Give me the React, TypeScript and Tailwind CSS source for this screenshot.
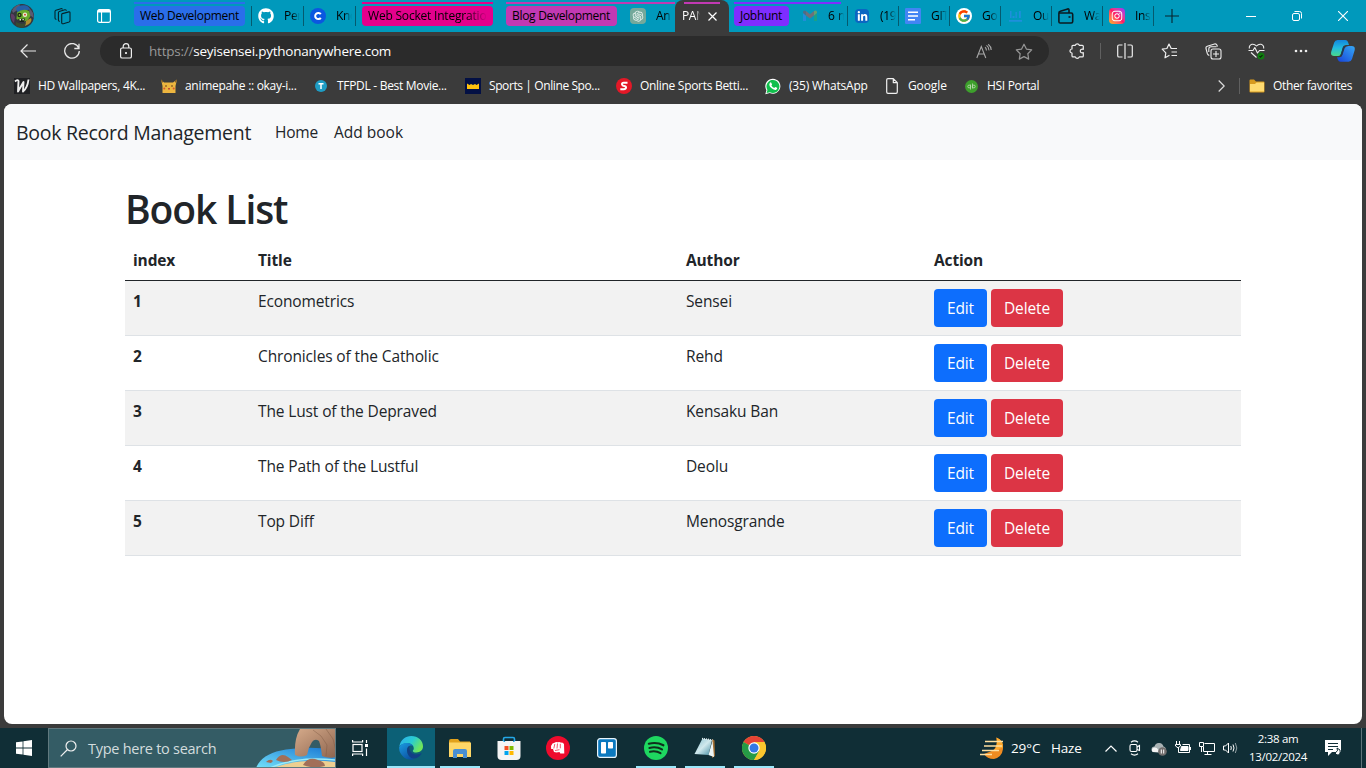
import type { ReactNode } from "react";
import { FaGithub, FaInstagram, FaLinkedinIn } from "react-icons/fa";
import { FcGoogle } from "react-icons/fc";
import { AiOutlineOpenAI } from "react-icons/ai";

/* ---------- tab strip ---------- */

function Tab({ icon, label, width = "w-[51px]" }: { icon: ReactNode; label: string; width?: string }) {
  return (
    <div className={`flex h-8 shrink-0 items-center ${width}`}>
      <span className="ml-[6px] flex size-4 shrink-0 items-center justify-center">{icon}</span>
      <span className="ml-[10px] w-[16px] overflow-hidden whitespace-nowrap text-[12px] tracking-[-0.3px] text-black [mask-image:linear-gradient(to_right,black_50%,transparent)]">
        {label}
      </span>
      <span className="ml-auto h-5 w-px bg-[#055a6e]" />
    </div>
  );
}

function GroupLabel({ label, className }: { label: string; className: string }) {
  return (
    <span className={`flex h-5 items-center overflow-hidden whitespace-nowrap rounded px-[6px] text-[12px] tracking-[-0.3px] text-black ${className}`}>
      {label}
    </span>
  );
}

const Workspaces = () => (
  <svg width="17" height="17" viewBox="0 0 17 17" fill="none" stroke="#06222a" strokeWidth="1.100" strokeLinejoin="round" strokeLinecap="round">
    <path d="M8.300 5.600 14.800 3.900q1.200-.2 1.200.9v8q0 .9-.9 1.200l-5.700 1.700q-1.700.4-1.700-1.200V6.600q0-.8.6-1" />
    <path d="M5.400 13.300q-1-.2-1-1.300V4.700q0-.9.9-1.200l5.500-1.700q1-.2 1.400.5" />
    <path d="M2 11.300q-1-.2-1-1.300V3.400q0-.9.900-1.200L6.900.7q1-.2 1.400.3" />
  </svg>
);

const ContactC = () => (
  <svg width="16" height="16" viewBox="0 0 16 16">
    <circle cx="8" cy="8" r="8" fill="#0b57e0" />
    <path d="M10.800 6.200A3.100 3.100 0 1 0 10.800 9.800" fill="none" stroke="#fff" strokeWidth="2" />
  </svg>
);

const Gmail = () => (
  <svg width="16" height="14" viewBox="0 0 16 14" opacity=".5">
    <path d="M1 12V4l3 2.400V12z" fill="#4285f4" />
    <path d="M15 12V4l-3 2.400V12z" fill="#34a853" />
    <path d="M1 4V2.500Q2 .8 4 2v4.400z" fill="#a04050" />
    <path d="M4 6.400V2l4 3.200L12 2v4.400l-4 3.200z" fill="#d9483b" />
    <path d="M15 4V2.500Q14 .8 12 2v4.400z" fill="#c8a526" />
  </svg>
);

const Docs = () => (
  <svg width="16" height="16" viewBox="0 0 16 16">
    <rect width="16" height="16" rx="1.200" fill="#4285f4" />
    <path d="M3 4.300h10M3 8h10M3 11.700h7" stroke="#fff" strokeWidth="1.600" />
  </svg>
);

const Wallet = () => (
  <svg width="16" height="16" viewBox="0 0 16 16" fill="none" stroke="#0b1a20" strokeWidth="1.600" strokeLinejoin="round">
    <path d="M1 5h12.200q1.500 0 1.500 1.500v7q0 1.500-1.500 1.500h-11Q.9 15 .9 13.700V5q0-1.400 1.400-1.700l7.500-2.400q1.200-.3 1.200 1V5" />
    <path d="M10.500 9h2" />
  </svg>
);

const City = () => (
  <svg width="13" height="12" viewBox="0 0 13 12" fill="#1f8fdc">
    <path d="M0 10h13v1.700H0zM1 1h1.500v7H1zM3.500 6h2v2h-2zM6.500 2h1.300v6H6.500zM10 1h1.800v7H10z" />
  </svg>
);

function TabStrip() {
  return (
    <div className="flex h-8 items-center bg-[#0099bc]">
      <svg className="ml-[10px] shrink-0" width="24" height="24" viewBox="0 0 24 24">
        <circle cx="12" cy="12" r="12" fill="#33363f" />
        <path d="M2 6.500Q5 1 10 .2L9 5 3 9zM19 4q5 4 4.700 10l-4-3z" fill="#5a5a72" />
        <path d="M6 5Q8 1 14 1.300q5 .2 6 4.200l-5 1-7 2.500z" fill="#2460a8" />
        <path d="M7 8.500q6-4.500 12-1.500l1.500 5-3 4.500-5 1.500-6-3z" fill="#68a82c" />
        <path d="M1 10q2.500-1 4 3l-1 6q-3.500-3.500-3-9" fill="#603c65" />
        <path d="m16 17 5-3q1.500 3-2 6l-4 2z" fill="#b09030" />
        <circle cx="9.500" cy="11" r="2.200" fill="#1c2a14" />
        <circle cx="15" cy="10.700" r="2.200" fill="#e8eed0" />
        <circle cx="15" cy="10.700" r=".9" fill="#d03020" />
        <circle cx="9.500" cy="11" r=".8" fill="#c4d55a" />
        <path d="m8 15 7-.500-1 3.500h-4z" fill="#18251a" />
        <path d="M9.500 15H11v1.500H9.500zm3 0h1.300v1.300h-1.300z" fill="#e8f0c8" />
        <path d="M6 18q5 3 10 1l-2 4.500q-5 .7-8-2z" fill="#3a4a30" />
      </svg>
      <span className="ml-[20px] w-[17px] shrink-0"><Workspaces /></span>
      <svg className="ml-[26px] shrink-0" width="14" height="14" viewBox="0 0 14 14">
        <rect x=".600" y=".600" width="12.800" height="12.800" rx="1.800" fill="none" stroke="#fff" strokeWidth="1.200" />
        <path d="M1 1h12v2.600H1zM4 3.500h1.100V13H4z" fill="#fff" />
      </svg>
      <div className="ml-[23px] flex h-8 w-[111px] shrink-0 flex-col pt-[2px]">
        <span className="mb-[2px] h-[2px] bg-[#2a6eea]" />
        <GroupLabel label="Web Development" className="bg-[#2a6eea]" />
      </div>
      <span className="ml-[6px] h-5 w-px shrink-0 bg-[#055a6e]" />
      <Tab icon={<FaGithub size={16} color="#fff" />} label="Per" width="w-[52px]" />
      <Tab icon={<ContactC />} label="Kno" width="w-[52px]" />
      <div className="ml-[6px] flex h-8 w-[131px] shrink-0 flex-col pt-[2px]">
        <span className="mb-[2px] h-[2px] bg-[#e3008c]" />
        <span className="flex h-5 items-center rounded bg-[#e3008c] px-[6px]">
          <span className="overflow-hidden whitespace-nowrap text-[12px] tracking-[-0.2px] text-black [mask-image:linear-gradient(to_right,black_82%,transparent)]">Web Socket Integration</span>
        </span>
      </div>
      <div className="ml-[13px] flex h-8 w-[169px] shrink-0 flex-col pt-[2px]">
        <span className="mb-[2px] h-[2px] bg-[#c239b3]" />
        <div className="flex items-center">
          <GroupLabel label="Blog Development" className="w-[111px] bg-[#c239b3]" />
          <span className="ml-[13px] flex size-4 items-center justify-center rounded-sm bg-[#74a99b]"><AiOutlineOpenAI size={14} color="#e6f2ee" /></span>
          <span className="ml-[10px] w-[15px] overflow-hidden whitespace-nowrap text-[12px] tracking-[-0.3px] [mask-image:linear-gradient(to_right,black_70%,transparent)]">Ani</span>
        </div>
      </div>
      <div className="flex h-8 w-[54px] shrink-0 flex-col rounded-t-lg bg-[#3b3b3b] pt-[2px]">
        <span className="mx-[9px] mb-[2px] h-[2px] bg-[#c239b3]" />
        <div className="flex h-5 items-center">
          <span className="ml-[7px] w-[18px] overflow-hidden whitespace-nowrap text-[12px] tracking-[-0.4px] text-white [mask-image:linear-gradient(to_right,black_75%,transparent)]">PAN</span>
          <svg className="ml-[8px]" width="9" height="9" viewBox="0 0 9 9" stroke="#fff" strokeWidth="1.200"><path d="m.5.5 8 8m0-8-8 8" /></svg>
        </div>
      </div>
      <div className="ml-[5px] flex h-8 w-[114px] shrink-0 flex-col pt-[2px]">
        <span className="mb-[2px] h-[2px] w-[107px] bg-[#7f2dff]" />
        <div className="flex items-center">
          <GroupLabel label="Jobhunt" className="w-[55px] bg-[#7f2dff]" />
          <span className="ml-[13px] flex size-4 items-center justify-center"><Gmail /></span>
          <span className="ml-[10px] w-[16px] overflow-hidden whitespace-nowrap text-[12px] [mask-image:linear-gradient(to_right,black_60%,transparent)]">6 new</span>
          <span className="ml-auto h-5 w-px bg-[#055a6e]" />
        </div>
      </div>
      <Tab icon={<span className="flex size-[14px] items-center justify-center rounded-sm bg-[#0a66c2]"><FaLinkedinIn size={11} color="#fff" /></span>} label="(19)" />
      <Tab icon={<Docs />} label="GIT" />
      <Tab icon={<span className="flex size-4 items-center justify-center rounded-full bg-white"><FcGoogle size={14} /></span>} label="Goo" />
      <Tab icon={<City />} label="Out" />
      <Tab icon={<Wallet />} label="Wal" />
      <Tab icon={<span className="flex size-4 items-center justify-center rounded bg-gradient-to-tr from-[#ffb000] via-[#ff1464] to-[#9a20ff]"><FaInstagram size={12} color="#fff" /></span>} label="Inst" />
      <svg className="ml-[11px] shrink-0" width="14" height="14" viewBox="0 0 14 14" stroke="#08242c" strokeWidth="1.100"><path d="M7 0v14M0 7h14" /></svg>
      <svg className="ml-auto shrink-0" width="10" height="10" viewBox="0 0 10 10" stroke="#fff"><path d="M0 5.500h10" /></svg>
      <svg className="ml-[36px] shrink-0" width="10" height="10" viewBox="0 0 10 10" fill="none" stroke="#fff"><rect x=".5" y="2.500" width="7" height="7" rx="1.500" /><path d="M2.500.5H7.500q2 0 2 2v5" /></svg>
      <svg className="ml-[36px] mr-[18px] shrink-0" width="10" height="10" viewBox="0 0 10 10" stroke="#fff" strokeWidth="1.100"><path d="m0 0 10 10M10 0 0 10" /></svg>
    </div>
  );
}

/* ---------- address bar ---------- */

function AddressRow() {
  return (
    <div className="flex h-[38px] items-center">
      <svg className="ml-[20px] shrink-0" width="16" height="14" viewBox="0 0 16 14" fill="none" stroke="#e8e8e8" strokeWidth="1.200"><path d="M16 7H1M7.500.5 1 7l6.500 6.500" /></svg>
      <svg className="ml-[28px] shrink-0" width="16" height="16" viewBox="0 0 16 16" fill="none" stroke="#e8e8e8" strokeWidth="1.300"><path d="M14.800 5.200A7.300 7.300 0 1 0 15.300 8M15 .8v4.700h-4.700" /></svg>
      <div className="ml-[20px] flex h-[30px] w-[949px] shrink-0 items-center rounded-full bg-[#2b2b2b]">
        <svg className="ml-[20px]" width="12" height="16" viewBox="0 0 12 16" fill="none" stroke="#eee" strokeWidth="1.200"><rect x=".6" y="5" width="10.800" height="10" rx="1.600" /><path d="M3.200 5V3.500a2.800 2.800 0 0 1 5.600 0V5" /><circle cx="6" cy="10" r=".5" fill="#fff" /></svg>
        <span className="ml-[17px] text-[13.500px] tracking-[-0.230px] text-white"><span className="text-[#999]">https://</span>seyisensei.pythonanywhere.com</span>
        <svg className="ml-auto" width="16" height="15" viewBox="0 0 16 15" fill="none" stroke="#a8a8a8" strokeWidth="1.100"><path d="m.8 14 4.500-11.500L9.800 14M2.400 10h5.800M9 3.300q1.500 1 1.400 3.200M10.500 1.400q2.600 1.700 2.400 5M12.200.3q3 2.200 3 5.700" /></svg>
        <svg className="ml-[23px] mr-[16px]" width="18" height="17" viewBox="0 0 18 17" fill="none" stroke="#969696" strokeWidth="1.200" strokeLinejoin="round"><path d="m9 1.200 2.400 4.900 5.300.8-3.900 3.800.9 5.400L9 13.600l-4.700 2.500.9-5.400L1.300 6.900l5.300-.8z" /></svg>
      </div>
      <div className="flex flex-1 items-center text-[#eee]">
        <svg className="ml-[20px]" width="16" height="16" viewBox="0 0 16 16" fill="none" stroke="currentColor" strokeWidth="1.200" strokeLinejoin="round"><path d="M4 2.300h2.300a2.100 2.100 0 0 1 4 0h3q1 0 1 1v3q-3-.6-3 1.700t3 1.700v3.200q0 1-1 1h-3a2.100 2.100 0 0 1-4 0H4q-1 0-1-1V10A2 2 0 0 1 3 6V3.300q0-1 1-1" /></svg>
        <span className="ml-[15px] h-4 w-px bg-[#606060]" />
        <svg className="ml-[16px]" width="16" height="16" viewBox="0 0 16 16" fill="none" stroke="currentColor" strokeWidth="1.200"><path d="M8 0v16M5.500 2H2Q.7 2 .7 3.300v9.400Q.7 14 2 14h3.500M10.500 2H14q1.300 0 1.300 1.300v9.400q0 1.300-1.300 1.300h-3.500" /></svg>
        <svg className="ml-[28px]" width="17" height="16" viewBox="0 0 17 16" fill="none" stroke="currentColor" strokeWidth="1.200" strokeLinejoin="round"><path d="M8.500 12.200 4 14.800l.8-5L1.200 6.200l4.700-.7L8 1l2.200 4.500H16M10.500 9H16M10.500 12.500H16" /></svg>
        <svg className="ml-[27px]" width="17" height="17" viewBox="0 0 17 17" fill="none" stroke="currentColor" strokeWidth="1.100"><rect x="6" y="6" width="10" height="10" rx="2" /><path d="M11 8v6M8 11h6M4.300 12.500Q2.800 12 2.300 10.500L1 5.500Q.6 3.700 2.300 3.200L9.500 1q1.800-.4 2.500 1.200l.4 1.500M3.800 9V6q0-2.200 2.200-2.200h5.500" /></svg>
        <svg className="ml-[26px]" width="17" height="17" viewBox="0 0 17 17" fill="none" stroke="currentColor" strokeWidth="1.100" strokeLinejoin="round"><path d="M.5 7.500H5l1.800-3L9.500 10l2-2.500H16.500M1.300 5.500Q1 2.200 4 1.300 6.500.8 8.500 3q2-2.200 4.500-1.700 3 .9 2.700 4.200M3 9.500l5.500 5" /><circle cx="13" cy="13" r="3.500" fill="#107c10" stroke="none" /><path d="m11.500 13.200 1 1 2-2" stroke="#062a06" /></svg>
        <svg className="ml-[29px]" width="14" height="4" viewBox="0 0 14 4" fill="currentColor"><circle cx="2" cy="2" r="1.300" /><circle cx="7" cy="2" r="1.300" /><circle cx="12" cy="2" r="1.300" /></svg>
        <svg className="ml-[23px]" width="24" height="22" viewBox="0 0 24 22">
          <defs>
            <linearGradient id="cpA" x1="0" y1="0" x2="0" y2="1"><stop stopColor="#1285dd" /><stop offset=".5" stopColor="#22bbe0" /><stop offset="1" stopColor="#4ad88c" /></linearGradient>
            <linearGradient id="cpB" x1="0" y1="1" x2="1" y2="0"><stop stopColor="#1742d8" /><stop offset="1" stopColor="#35a8f5" /></linearGradient>
          </defs>
          <path d="M6.500 0h7.800q2 0 2.700 2l1 3h-3.200q-2.300 0-3 2.500L10 13.500q-.8 2.500-2.800 2.500H3Q-.9 16 .3 11.500L3.200 2.500Q4 0 6.500 0" fill="url(#cpA)" />
          <path d="M17.500 6h3.200Q24.600 6 23.600 10.500L21 19q-.8 2.700-3.500 2.700H9.500q-2 0-2.600-2L6 17.200h2.500q2.300 0 3-2.500l2-6.200Q14.300 6 17.500 6" fill="url(#cpB)" />
          <path d="m12.800 6.500-2.600 9" stroke="#173a60" strokeWidth="1.200" />
        </svg>
      </div>
    </div>
  );
}

/* ---------- favorites ---------- */

function Favorite({ icon, label, className }: { icon: ReactNode; label: string; className: string }) {
  return (
    <div className={`flex shrink-0 items-center ${className}`}>
      <span className="flex size-4 shrink-0 items-center justify-center">{icon}</span>
      <span className="ml-2 whitespace-nowrap">{label}</span>
    </div>
  );
}

function FavoritesRow() {
  return (
    <div className="flex h-[34px] items-center pb-[2px] pl-[14px] text-[12px] tracking-[-0.300px] text-white">
      <Favorite className="w-[147px]" label="HD Wallpapers, 4K..." icon={
        <svg width="16" height="16" viewBox="0 0 16 16"><rect width="16" height="16" fill="#202124" /><path d="M1 3.500q3-2.500 3.500-.5L4 13.500 9.500 4 9 13.500Q13.500 10 14.500 1.500" fill="none" stroke="#eee" strokeWidth="1.900" strokeLinejoin="round" /></svg>} />
      <Favorite className="w-[152px]" label="animepahe :: okay-i..." icon={
        <svg width="16" height="14" viewBox="0 0 16 14"><path d="m0 .5 3 3h9L16 .500 14.500 7v7h-13V7z" fill="#ecb53f" /><path d="m0 .5 2 1.600L1.200 4zM16 .5 14 2l.8 2z" fill="#6b4a20" /><circle cx="5" cy="7" r=".8" fill="#5a3315" /><circle cx="11" cy="7" r=".8" fill="#5a3315" /><circle cx="3.300" cy="9.500" r="1" fill="#d95530" /><circle cx="12.700" cy="9.500" r="1" fill="#d95530" /><path d="M7 9h2v1.500H7z" fill="#c04b35" /></svg>} />
      <Favorite className="w-[152px]" label="TFPDL - Best Movie..." icon={
        <svg width="12" height="12" viewBox="0 0 12 12"><circle cx="6" cy="6" r="6" fill="#1e9cc4" /><path d="M3.500 3.700h5M6 3.500v5.500" stroke="#fff" strokeWidth="1.500" /></svg>} />
      <Favorite className="w-[151px] tracking-[-0.400px]" label="Sports | Online Spo..." icon={
        <svg width="16" height="16" viewBox="0 0 16 16"><rect width="16" height="16" fill="#031044" /><path d="M2 5.500 4.500 7 6 6l2 1 2-1 1.500 1L14 5.500V11H2z" fill="#ffc20e" /></svg>} />
      <Favorite className="w-[149px]" label="Online Sports Betti..." icon={
        <svg width="16" height="16" viewBox="0 0 16 16"><circle cx="8" cy="8" r="8" fill="#e41827" /><path d="M11.500 4.700H7.800Q5.700 4.700 6 6.400T8.200 8q2 0 1.800 1.700T7.500 11.300H4.300" fill="none" stroke="#fff" strokeWidth="2" /></svg>} />
      <Favorite className="w-[119px] tracking-[-0.200px]" label="(35) WhatsApp" icon={
        <svg width="17" height="17" viewBox="0 0 17 17"><path d="m.3 16.700 1.200-4.300A8 8 0 1 1 5 15.500z" fill="#fff" /><path d="m1.700 15.300.9-3.200A6.900 6.900 0 1 1 5.200 14.500z" fill="#10bf4c" /><path d="M5 5q1-1.500 1.700-.5l.8 1.800-.7 1.100q1 1.800 3 2.600l1-1.100 2.100 1q.5 1-1 2-1.700.7-4.500-1.200T4.600 7Q4.500 5.800 5 5" fill="#fff" /></svg>} />
      <Favorite className="w-[79px] tracking-[-0.100px]" label="Google" icon={
        <svg width="12" height="16" viewBox="0 0 12 16" fill="none" stroke="#f0f0f0" strokeWidth="1.200" strokeLinejoin="round"><path d="M7.300.7H2Q.7.700.7 2v12q0 1.300 1.300 1.300h8q1.300 0 1.300-1.300V4.700zv4h4" /></svg>} />
      <Favorite className="" label="HSI Portal" icon={
        <svg width="13" height="13" viewBox="0 0 13 13"><circle cx="6.500" cy="6.500" r="6.500" fill="#3d9f2c" /><path d="M5.500 4.500v5M7.500 3.500v5" stroke="#bfe0b5" strokeWidth=".8" /><circle cx="4.200" cy="6.500" r="1.400" fill="none" stroke="#bfe0b5" strokeWidth=".8" /><circle cx="8.800" cy="6.500" r="1.400" fill="none" stroke="#bfe0b5" strokeWidth=".8" /></svg>} />
      <svg className="ml-auto" width="7" height="12" viewBox="0 0 7 12" fill="none" stroke="#ddd" strokeWidth="1.200"><path d="m.7.5 5.500 5.500-5.500 5.500" /></svg>
      <span className="ml-[14px] h-4 w-px bg-[#606060]" />
      <div className="ml-[9px] mr-[14px] flex items-center">
        <svg width="16" height="14" viewBox="0 0 16 14"><path d="M.5 1.500q0-1 1-1H5L7 2.500h7.500q1 0 1 1v9q0 1-1 1h-13q-1 0-1-1z" fill="#d79a1e" /><path d="M1 5h5l1.500-1.500H15v9H1z" fill="#ffdb70" /></svg>
        <span className="ml-2 w-[79px] whitespace-nowrap tracking-[-0.350px]">Other favorites</span>
      </div>
    </div>
  );
}

/* ---------- page ---------- */

const books = [
  { title: "Econometrics", author: "Sensei" },
  { title: "Chronicles of the Catholic", author: "Rehd" },
  { title: "The Lust of the Depraved", author: "Kensaku Ban" },
  { title: "The Path of the Lustful", author: "Deolu" },
  { title: "Top Diff", author: "Menosgrande" },
];

function BookPage() {
  return (
    <div className="mx-1 h-[620px] overflow-hidden rounded-lg bg-white text-[16px] text-[#212529]">
      <nav className="flex h-14 items-center bg-[#f8f9fa] px-3 pt-[2px]">
        <a className="w-[259px] whitespace-nowrap text-[19.500px] leading-[30px] tracking-[-0.270px]">Book Record Management</a>
        <a className="w-[59px] whitespace-nowrap text-[15.500px] tracking-[-0.200px]">Home</a>
        <a className="whitespace-nowrap text-[15.500px]">Add book</a>
      </nav>
      <main className="ml-[121px] mt-6 w-[1116px]">
        <h1 className="mb-2 h-12 pt-px text-[39px] font-semibold leading-[48px] tracking-[-1.100px]">Book List</h1>
        <table className="w-full table-fixed border-collapse text-left text-[15.500px] leading-6 tracking-[-0.130px]">
          <thead>
            <tr className="h-[40px] border-b border-[#212529]">
              <th className="w-[125px] px-2 pt-px">index</th>
              <th className="w-[428px] px-2 pt-px">Title</th>
              <th className="w-[248px] px-2 pt-px">Author</th>
              <th className="px-2 pt-px">Action</th>
            </tr>
          </thead>
          <tbody>
            {books.map((b, i) => (
              <tr key={b.title} className="h-[55px] border-b border-[#dee2e6] align-top odd:bg-[#f2f2f2]">
                <th className="p-2">{i + 1}</th>
                <td className="p-2">{b.title}</td>
                <td className="p-2">{b.author}</td>
                <td className="p-2">
                  <div className="flex gap-1 text-white">
                    <button className="h-[38px] w-[53px] rounded bg-[#0d6efd]">Edit</button>
                    <button className="h-[38px] w-[72px] rounded bg-[#dc3545]">Delete</button>
                  </div>
                </td>
              </tr>
            ))}
          </tbody>
        </table>
      </main>
    </div>
  );
}

/* ---------- taskbar ---------- */

function TaskItem({ children, active, running }: { children: ReactNode; active?: boolean; running?: boolean }) {
  return (
    <div className={`mr-px flex h-10 w-12 shrink-0 flex-col items-center ${active ? "bg-[#0c6076]" : ""}`}>
      <span className="flex h-[38px] items-center pt-[2px]">{children}</span>
      {(active || running) && <span className={`h-[2px] bg-[#9be7fa] ${active ? "w-12" : "w-10"}`} />}
    </div>
  );
}

function SearchBox() {
  return (
    <div className="flex h-10 w-[288px] shrink-0 items-center overflow-hidden border border-[#60797f] bg-[#345c65]">
      <svg className="ml-[11px]" width="17" height="17" viewBox="0 0 17 17" fill="none" stroke="#f0f0f0" strokeWidth="1.200"><circle cx="11" cy="6" r="5" /><path d="M7.500 9.500.7 16.300" /></svg>
      <span className="ml-[11px] whitespace-nowrap pt-px text-[14.500px] tracking-[-0.270px] text-[#d3dcde]">Type here to search</span>
      <svg className="-mr-px ml-auto shrink-0" width="80" height="39" viewBox="0 0 80 39">
        <defs>
          <linearGradient id="sea" x1="0" y1="1" x2="1" y2="0"><stop stopColor="#74e2fa" /><stop offset="1" stopColor="#1675d2" /></linearGradient>
          <linearGradient id="rock" x1="0" y1="0" x2="1" y2="1"><stop stopColor="#d5aa8a" /><stop offset="1" stopColor="#8e654f" /></linearGradient>
        </defs>
        <path d="M0 39Q6 24 30 20.500 55 17 80 21v18z" fill="url(#sea)" />
        <path d="M17 39q25-10 63-6v6z" fill="#edcf91" />
        <path d="M14 39q26-12 66-8" fill="none" stroke="#9eeaf7" strokeWidth="1.500" />
        <path d="M44 0h36v28q-8 2-14-1-1-10-3-15-4-3-7 1-4 6-5 13-6 3-12 0Q38 10 44 0" fill="url(#rock)" />
        <path d="m57 1 8 6 6 9-1 11M70 0l7 10 3 12" fill="none" stroke="#78543f" opacity=".4" />
        <path d="M20 31q5-8 12-3l4 3q-8 4-16 0M47 36q5-9 15-5 7 2 7 6-12 3-22-1M10 33q4-4 7-1l-2 2z" fill="#a26f58" />
      </svg>
    </div>
  );
}

function Taskbar() {
  return (
    <div className="flex h-10 items-center bg-[#102e36] text-white">
      <svg className="mx-4 shrink-0" width="16" height="16" viewBox="0 0 16 16" fill="#fff"><path d="m0 2.300 6.600-.9v6.200H0zM7.400 1.300 16 0v7.600H7.400zM0 8.400h6.600v6.200L0 13.700zM7.400 8.400H16V16l-8.600-1.200z" /></svg>
      <SearchBox />
      <svg className="ml-[16px] mr-[19px] shrink-0" width="16" height="16" viewBox="0 0 16 16" fill="none" stroke="#fff" strokeWidth="1.200"><rect x="1" y="4.500" width="9" height="7" /><path d="M.6 0v2h10V0M.6 16v-2h10v2M14.500 0v3M14.500 8.500V16" /><path d="M13 4h3v3h-3z" fill="#fff" stroke="none" /></svg>
      <TaskItem active>
        <svg width="24" height="24" viewBox="0 0 24 24">
          <defs>
            <linearGradient id="edgeTop" x1="0" y1="0" x2="1" y2=".5"><stop stopColor="#2dacef" /><stop offset=".55" stopColor="#29cbd2" /><stop offset="1" stopColor="#70e65a" /></linearGradient>
            <linearGradient id="edgeLow" x1="0" y1="0" x2=".7" y2="1"><stop stopColor="#1b9ce2" /><stop offset="1" stopColor="#0b4fa0" /></linearGradient>
          </defs>
          <path d="M.3 10.500C1.500 4 6.500 0 12.200 0 19 0 24 4.800 24 10.300c0 4-3 6.200-6.500 6.200-2.800 0-4-1-3.700-1.800.2-.5 1-1 1-2.500 0-3-3-5-6.600-5C4.500 7.200 1.500 8.500.3 10.500" fill="url(#edgeTop)" />
          <path d="M.1 11.500C1 8.500 4.500 6.800 8.200 6.900c3 0 5.500 1.300 6.200 3.300-1-.7-2-.9-3-.7-2.500.6-3.700 3.200-3.200 6 .7 4 4 7 7.800 7.500A12 12 0 0 1 .1 11.500" fill="url(#edgeLow)" />
          <path d="M8.200 15.500c-.5-2.800.7-5 2.600-5.700-1.500 3 .6 8.200 5.700 8.700 2.200.2 4.400-.6 5.500-1.200.5-.2.700.1.500.5-3 4.700-7.500 5.500-10 4.300-2.300-1-4-3.500-4.300-6.600" fill="#123f86" />
        </svg>
      </TaskItem>
      <TaskItem running>
        <svg width="22" height="19" viewBox="0 0 22 19"><path d="M0 2q0-2 2-2h7l2 2.500h10V18H0z" fill="#e2a21c" /><path d="M0 3.500h22V18H0z" fill="#ffd767" /><path d="M4 19v-7q0-2 2-2h10q2 0 2 2v7h-4v-4H8v4z" fill="#4a90d2" /></svg>
      </TaskItem>
      <TaskItem>
        <svg width="24" height="24" viewBox="0 0 24 24"><path d="M6.500 7V3q0-1.500 1.500-1.500h8Q17.500 1.500 17.500 3v4" fill="none" stroke="#24a8e8" strokeWidth="1.600" /><path d="M.5 5h23v15q0 4-4 4h-15q-4 0-4-4z" fill="#f4f4f4" /><path d="M6.500 6V5h1.600v1zM16 6V5h1.600v1z" fill="#24a8e8" /><path d="M7.500 10h4v4h-4z" fill="#f25022" /><path d="M12.500 10h4v4h-4z" fill="#7fba00" /><path d="M7.500 15h4v4h-4z" fill="#00a4ef" /><path d="M12.500 15h4v4h-4z" fill="#ffb900" /></svg>
      </TaskItem>
      <TaskItem>
        <svg width="24" height="24" viewBox="0 0 24 24"><circle cx="12" cy="12" r="12" fill="#ee0b2d" /><path d="m5 10 1.500-2.500 2-.7L10 6l1.700.3 1.500-.3 1.500.5 2 .2 1.300 1.300.3 9.500h-4l-.8-1.500-3 .5-2.500-.5-1-3H5.200z" fill="#fff" /><path d="m8.800 8-1 4.500M11.500 7.500 11 12.500M14.300 7.800v4.500M9 14.500l4.500-.8" stroke="#ee0b2d" strokeWidth=".7" fill="none" /></svg>
      </TaskItem>
      <TaskItem>
        <svg width="20" height="20" viewBox="0 0 20 20"><rect x=".6" y=".6" width="18.800" height="18.800" rx="2.500" fill="#0b79bf" stroke="#e8f4fb" strokeWidth="1.200" /><rect x="4" y="4" width="5" height="11.500" rx=".7" fill="#fff" /><rect x="11" y="4" width="5" height="6.500" rx=".7" fill="#fff" /></svg>
      </TaskItem>
      <TaskItem running>
        <svg width="24" height="24" viewBox="0 0 24 24"><circle cx="12" cy="12" r="12" fill="#1ed760" /><path d="M4.800 7.800q8-2 14.600 1.500M5.400 11.900q7-1.800 12.600 1.500M6 15.700q6-1.300 10.500 1.400" fill="none" stroke="#102e1c" strokeWidth="2.100" strokeLinecap="round" /></svg>
      </TaskItem>
      <TaskItem running>
        <svg width="24" height="24" viewBox="0 0 24 24"><defs><linearGradient id="note" x1="0" y1="0" x2="1" y2="1"><stop stopColor="#83bccb" /><stop offset=".5" stopColor="#d1e9ed" /><stop offset="1" stopColor="#438ca2" /></linearGradient></defs><path d="m19 3 2.500 1.500L22 20l-3 2z" fill="#a47135" /><path d="M9.500 2.500 19 4l-3.500 15L1.500 18z" fill="url(#note)" /><path d="m15.500 19 5.500 2L19.500 4.500z" fill="#ecf6f7" /><path d="m9 2.500 10.500 1.500" stroke="#e4edee" strokeWidth="1.500" strokeDasharray="1 1" /></svg>
      </TaskItem>
      <TaskItem running>
        <svg width="24" height="24" viewBox="0 0 24 24"><circle cx="12" cy="12" r="12" fill="#fbc62e" /><path d="M12 12 1.600 6A12 12 0 0 1 22.400 6H12z" fill="#e54335" /><path d="M1.600 6A12 12 0 0 0 12 24l5.200-9L12 12z" fill="#269b46" /><path d="M22.400 6H12v6l5.200 3L12 24A12 12 0 0 0 22.400 6" fill="#fbc62e" /><circle cx="12" cy="12" r="5.700" fill="#fff" /><circle cx="12" cy="12" r="4.500" fill="#3478e5" /></svg>
      </TaskItem>
      <svg className="ml-auto shrink-0" width="24" height="24" viewBox="0 0 24 24"><path d="M16.500 1.500q7.500 3.500 6.500 11.500-1 8-9 10-7 0-10-5l9-3.500q5-4 3.500-13" fill="#f08c21" /><path d="M16.500 1.500q7 3 6.500 10l-9 3q4-4 2.500-13" fill="#ffab2e" /><path d="M5 5.500h10M13 5.500h10M4 10h18M2 14.500h17M0 18.500h12" stroke="#ffe0a0" strokeWidth="1.500" /></svg>
      <span className="ml-[7px] w-[40px] shrink-0 text-[13.500px] tracking-[-0.100px]">29°C</span>
      <span className="w-[54px] shrink-0 text-[13.500px] tracking-[-0.200px]">Haze</span>
      <svg className="shrink-0" width="12" height="7" viewBox="0 0 12 7" fill="none" stroke="#fff" strokeWidth="1.200"><path d="M.5 6.500 6 1l5.500 5.500" /></svg>
      <svg className="ml-[12px] shrink-0" width="12" height="16" viewBox="0 0 12 16" fill="none" stroke="#fff" strokeWidth="1.100"><rect x="1" y="4.500" width="7" height="7" rx="1.500" /><path d="m8 7 2.500-1.500v5L8 9.500M2 2.200Q5.500-.5 9 2.200M2 13.800q3.500 2.700 7 0" /></svg>
      <svg className="ml-[10px] shrink-0" width="16" height="15" viewBox="0 0 16 15"><path d="M1 10Q-.5 6 3.500 5.500 4.500 1.500 8.500 2q3 .3 4 3.500Q15 6 15 9l-5 2z" fill="#a9b2b4" /><path d="M1.500 11Q-.5 8 3 6.500q3-.5 4 2L8 11.500z" fill="#f4f4f4" /><circle cx="11.500" cy="10.500" r="4.300" fill="#716d6d" /><path d="M10.300 8.500v4M12.700 8.500v4" stroke="#fff" /></svg>
      <svg className="ml-[8px] shrink-0" width="16" height="14" viewBox="0 0 16 14" fill="none" stroke="#fff"><path d="M1.500 0v3M4.500 0v3M.5 3.500h5v1.500L3 6.800.5 5zM3.500 7v4.500h11v-8H7.500M15.500 6v3" /><path d="M6.500 5.500h6.500v4H5.500z" fill="#fff" /></svg>
      <svg className="ml-[8px] shrink-0" width="16" height="15" viewBox="0 0 16 15" fill="none" stroke="#fff"><path d="M5.500 2.500h10v8H4.500V6M8.500 11v3M5.500 13.500h7M.5 1.500h4v4h-4zM2.500 6v5" /></svg>
      <svg className="ml-[8px] shrink-0" width="16" height="14" viewBox="0 0 16 14" fill="none" stroke="#fff"><path d="M.5 5h2L5.500 2v10L2.500 9H.5zM7.800 5q1 2 0 4M10 3.500q2 3.500 0 7" /><path d="M12.300 2q3 5 0 10" opacity=".55" /></svg>
      <div className="ml-[4px] flex w-[70px] shrink-0 flex-col items-center whitespace-nowrap text-[11.500px] leading-[18px] tracking-[-0.300px]">
        <span>2:38 am</span>
        <span>13/02/2024</span>
      </div>
      <svg className="ml-[12px] shrink-0" width="16" height="17" viewBox="0 0 16 17"><path d="M0 0h16v12H7l-4 4v-4H0z" fill="#fff" /><path d="M3 3.500h10M3 6.500h10M3 9.500h5" stroke="#102e36" strokeWidth="1.200" /><path d="M12 8q2 3-2 5l2 2q4 0 3-5z" fill="#fff" stroke="#102e36" /></svg>
      <span className="ml-[20px] mr-[4px] h-10 w-px shrink-0 bg-[#5d7379]" />
    </div>
  );
}

export default function App() {
  return (
    <div className="flex h-[768px] w-[1366px] flex-col overflow-hidden bg-[#3b3b3b] font-['Open_Sans','Noto_Sans',sans-serif]">
      <TabStrip />
      <AddressRow />
      <FavoritesRow />
      <BookPage />
      <div className="mt-1"><Taskbar /></div>
    </div>
  );
}
